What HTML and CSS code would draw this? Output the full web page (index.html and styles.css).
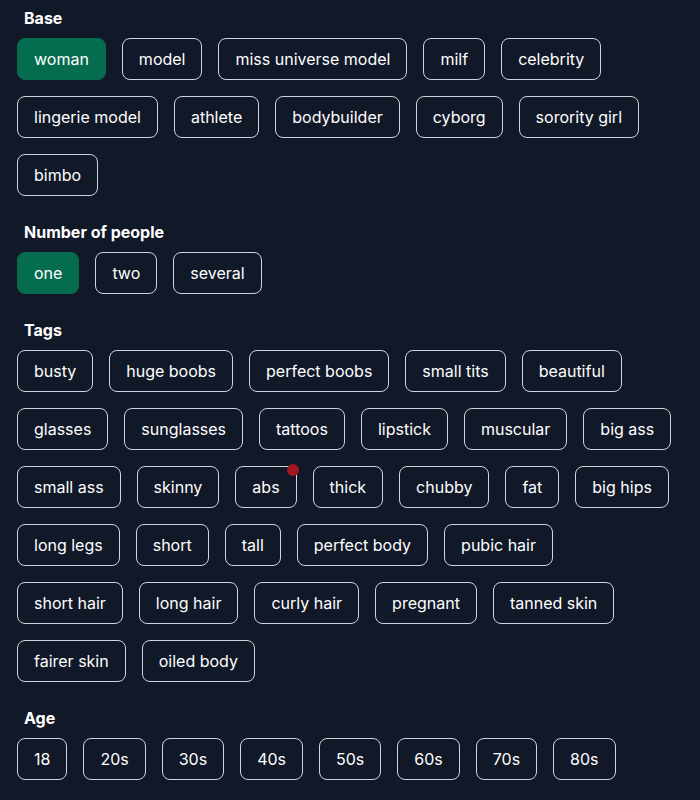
FILE: index.html
```html
<!DOCTYPE html>
<html lang="en">
<head>
  <meta charset="UTF-8" />
  <meta name="viewport" content="width=device-width, initial-scale=1.0"/>
  <title>Options</title>
  <link rel="stylesheet" href="styles.css">
</head>
<body>
  <div class="panel">
    <div class="section">
      <h3>Base</h3>
      <div class="chips">
        <button class="chip active">woman</button>
        <button class="chip">model</button>
        <button class="chip">miss universe model</button>
        <button class="chip">milf</button>
        <button class="chip">celebrity</button>
        <button class="chip">lingerie model</button>
        <button class="chip">athlete</button>
        <button class="chip">bodybuilder</button>
        <button class="chip">cyborg</button>
        <button class="chip">sorority girl</button>
        <button class="chip">bimbo</button>
      </div>
    </div>

    <div class="section">
      <h3>Number of people</h3>
      <div class="chips">
        <button class="chip active">one</button>
        <button class="chip">two</button>
        <button class="chip">several</button>
      </div>
    </div>

    <div class="section">
      <h3>Tags</h3>
      <div class="chips">
        <button class="chip">busty</button>
        <button class="chip">huge boobs</button>
        <button class="chip">perfect boobs</button>
        <button class="chip">small tits</button>
        <button class="chip">beautiful</button>
        <button class="chip">glasses</button>
        <button class="chip">sunglasses</button>
        <button class="chip">tattoos</button>
        <button class="chip">lipstick</button>
        <button class="chip">muscular</button>
        <button class="chip">big ass</button>
        <button class="chip">small ass</button>
        <button class="chip">skinny</button>
        <button class="chip">abs<span class="dot"></span></button>
        <button class="chip">thick</button>
        <button class="chip">chubby</button>
        <button class="chip">fat</button>
        <button class="chip">big hips</button>
        <button class="chip">long legs</button>
        <button class="chip">short</button>
        <button class="chip">tall</button>
        <button class="chip">perfect body</button>
        <button class="chip">pubic hair</button>
        <button class="chip">short hair</button>
        <button class="chip">long hair</button>
        <button class="chip">curly hair</button>
        <button class="chip">pregnant</button>
        <button class="chip">tanned skin</button>
        <button class="chip">fairer skin</button>
        <button class="chip">oiled body</button>
      </div>
    </div>

    <div class="section">
      <h3>Age</h3>
      <div class="chips">
        <button class="chip">18</button>
        <button class="chip">20s</button>
        <button class="chip">30s</button>
        <button class="chip">40s</button>
        <button class="chip">50s</button>
        <button class="chip">60s</button>
        <button class="chip">70s</button>
        <button class="chip">80s</button>
      </div>
    </div>
  </div>
</body>
</html>
```

FILE: styles.css
```css
body {
  margin: 0;
  background: #111827;
  color: #fff;
  font-family: Inter, 'Noto Sans', sans-serif;
}
.panel {
  padding: 8px 27.5px 8px 17px;
}
.section {
  margin-bottom: 26px;
}
h3 {
  margin: 0 0 10px;
  padding-left: 7px;
  font-size: 16px;
  line-height: 20px;
  font-weight: 700;
}
.chips {
  display: flex;
  flex-wrap: wrap;
  gap: 16px;
}
.chip {
  position: relative;
  padding: 10px 16px;
  border: 1px solid #d1d5db;
  border-radius: 8px;
  background: transparent;
  color: #fff;
  font-family: inherit;
  font-size: 16px;
  line-height: 20px;
}
.chip.active {
  background: #066c4f;
  border-color: #066c4f;
}
.dot {
  position: absolute;
  top: -3px;
  right: -3px;
  width: 12px;
  height: 12px;
  border-radius: 50%;
  background: #a3181f;
}
```
